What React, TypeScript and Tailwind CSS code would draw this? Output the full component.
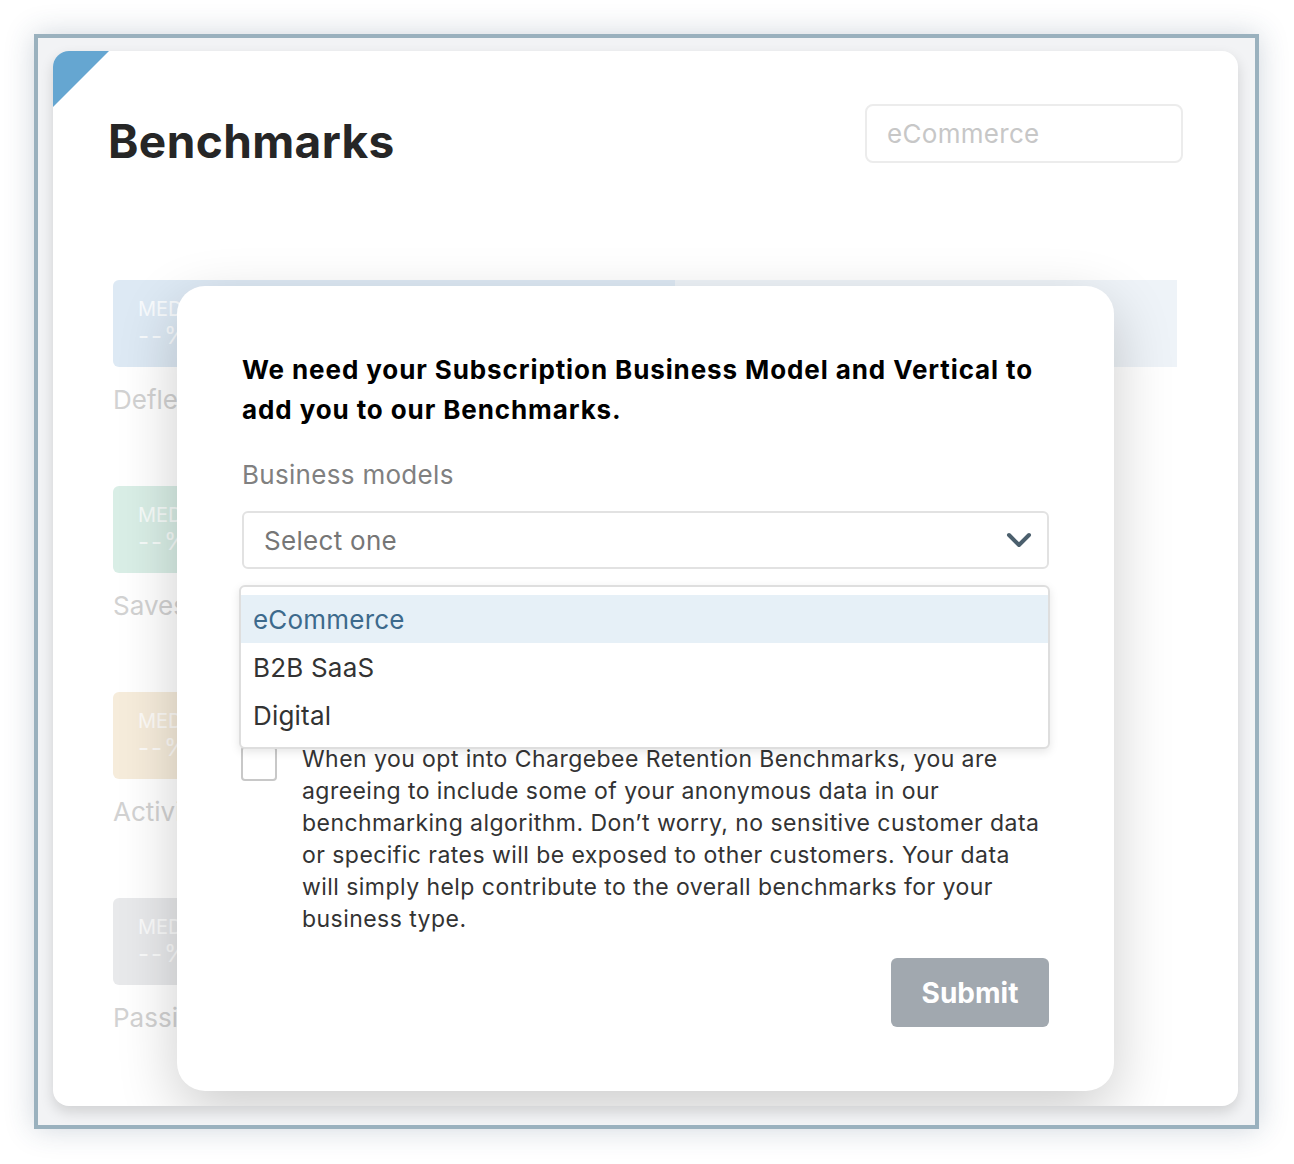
import React from "react";

const tiles = [
  { bg: "bg-[#dde9f4]", label: "Deflections", wide: true },
  { bg: "bg-[#d9eee6]", label: "Saves", wide: false },
  { bg: "bg-[#f6ecdb]", label: "Activity", wide: false },
  { bg: "bg-[#e8e9eb]", label: "Passive churn", wide: false },
];

function Chevron() {
  return (
    <svg width="26" height="18" viewBox="0 0 26 18" fill="none">
      <polyline points="3,4 13,14 23,4" stroke="#4b5f6d" strokeWidth="4" strokeLinecap="round" strokeLinejoin="round" />
    </svg>
  );
}

export default function App() {
  return (
    <div className="min-h-screen bg-white p-[34px] font-['Inter','Noto_Sans',sans-serif]">
      <div className="w-[1225px] h-[1095px] border-4 border-[#9ab1be] bg-[#f2f3f5] pt-[13px] pl-[15px] shadow-[0_0_28px_rgba(40,70,100,0.22)]">
        <div className="relative w-[1185px] h-[1055px] rounded-2xl bg-white overflow-hidden shadow-[0_6px_14px_rgba(0,0,0,0.14)]">
          {/* corner ribbon */}
          <div className="absolute left-0 top-0 w-0 h-0 border-t-[56px] border-r-[56px] border-t-[#65a6d1] border-r-transparent" />

          <div className="flex items-start justify-between pt-[53px] px-[55px]">
            <h1 className="mt-[9px] text-[46px] leading-[56px] font-bold text-[#262626] tracking-[0.4px]">Benchmarks</h1>
            <div className="w-[318px] h-[59px] rounded-lg border-2 border-[#ececec] flex items-center px-[20px] text-[26px] text-[#c7c7c7] tracking-[0.3px]">
              eCommerce
            </div>
          </div>

          {/* faded dashboard behind modal */}
          <div className="mt-[111px] pl-[60px] pr-[61px] flex flex-col gap-[68px]">
            {tiles.map((t) => (
              <div key={t.label}>
                <div className="flex h-[87px]">
                  <div className={`${t.bg} ${t.wide ? "w-[562px]" : "w-[560px]"} h-full rounded-l-md px-[25px] pt-[16px] text-white/80`}>
                    <div className="text-[20px] leading-[26px]">MEDIAN</div>
                    <div className="text-[24px] leading-[28px] tracking-[2px]">--%</div>
                  </div>
                  {t.wide && <div className="flex-1 bg-[#eef3f8]" />}
                </div>
                <div className="mt-[15px] text-[26px] leading-[36px] text-[#d2d2d2]">{t.label}</div>
              </div>
            ))}
          </div>

          {/* modal */}
          <div className="absolute left-[124px] top-[235px] w-[937px] h-[805px] rounded-[28px] bg-white shadow-[0_20px_60px_rgba(0,0,0,0.2)] pt-[64px] px-[65px]">
            <h2 className="text-[26px] leading-[40px] font-bold text-black tracking-[0.9px]">
              We need your Subscription Business Model and Vertical to add you to our Benchmarks.
            </h2>

            <div className="mt-[27px] text-[26px] leading-[36px] text-[#808080] tracking-[0.3px]">Business models</div>
            <div className="relative mt-[18px]">
              <div className="h-[58px] rounded-md border-2 border-[#e2e2e2] flex items-center justify-between pl-[20px] pr-[15px]">
                <span className="text-[26px] text-[#767676] tracking-[0.3px]">Select one</span>
                <Chevron />
              </div>
              <div className="absolute z-10 left-[-3px] top-[74px] w-[811px] rounded-md border-2 border-[#dedede] bg-white py-[8px] shadow-[0_3px_10px_rgba(0,0,0,0.10)]">
                <div className="h-[48px] flex items-center px-[12px] bg-[#e6f0f7] text-[26px] text-[#3d6a8c] tracking-[0.2px]">eCommerce</div>
                <div className="h-[48px] flex items-center px-[12px] text-[26px] text-[#333333] tracking-[0.2px]">B2B SaaS</div>
                <div className="h-[48px] flex items-center px-[12px] text-[26px] text-[#333333] tracking-[0.2px]">Digital</div>
              </div>
            </div>

            {/* space taken by the open list */}
            <div className="h-[174px]" />

            <div className="flex gap-[25px]">
              <div className="mt-[3px] -ml-px w-[36px] h-[35px] shrink-0 rounded border-2 border-[#c8c8c8]" />
              <p className="text-[23px] leading-[32px] text-[#333333] tracking-[0.45px]">
                When you opt into Chargebee Retention Benchmarks, you are agreeing to include some of your anonymous data in our benchmarking algorithm. Don’t worry, no sensitive customer data or specific rates will be exposed to other customers. Your data will simply help contribute to the overall benchmarks for your business type.
              </p>
            </div>

            <div className="mt-[23px] flex justify-end">
              <button className="w-[158px] h-[69px] rounded-md bg-[#a1a8af] text-white text-[28px] font-bold">Submit</button>
            </div>
          </div>
        </div>
      </div>
    </div>
  );
}
